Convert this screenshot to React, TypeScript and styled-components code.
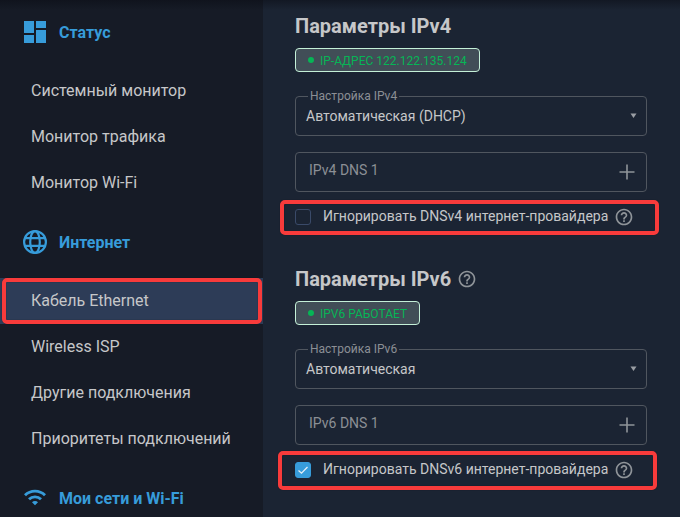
import React from "react";
import styled, { createGlobalStyle } from "styled-components";

const GlobalStyle = createGlobalStyle`
  *, *::before, *::after { box-sizing: border-box; }
  html, body { margin: 0; padding: 0; }
  body {
    background: #1b2433;
    font-family: Roboto, "Liberation Sans", sans-serif;
    color: #c6c7c9;
    overflow: hidden;
  }
`;

const Page = styled.div`
  position: relative;
  display: flex;
  width: 680px;
  height: 517px;
  overflow: hidden;
  background: #1b2433;
`;

const TopShade = styled.div`
  position: absolute;
  inset: 0 0 auto 0;
  height: 10px;
  background: linear-gradient(rgba(10, 12, 20, 0.5), rgba(10, 12, 20, 0));
`;

const Sidebar = styled.nav`
  flex: 0 0 263px;
  margin-top: -4px;
  background: #161b26;
`;

const GroupTitle = styled.div`
  display: flex;
  align-items: center;
  gap: 11px;
  height: 72px;
  padding-left: 22px;
  color: #379cda;
  font-size: 16px;
  font-weight: 700;
  white-space: nowrap;

  svg { flex: none; display: block; }
`;

const NavItem = styled.div<{ $active?: boolean }>`
  position: relative;
  display: flex;
  align-items: center;
  height: 46px;
  padding: 0 0 1px 31px;
  font-size: 16px;
  white-space: nowrap;
  background: ${({ $active }) => ($active ? "#2d3c57" : "transparent")};
`;

const Marker = styled.div<{ $inset: string }>`
  position: absolute;
  inset: ${({ $inset }) => $inset};
  border: 4px solid #f83b3b;
  border-radius: 5px;
  box-shadow: 0 0 1px rgba(0, 0, 0, 0.6), inset 0 0 1px rgba(0, 0, 0, 0.6);
  pointer-events: none;
`;

const Main = styled.main`
  flex: 1;
  padding: 12px 33px 0 32px;
`;

const Section = styled.section`
  height: 253px;
`;

const SectionTitle = styled.h2`
  display: flex;
  align-items: center;
  gap: 6px;
  margin: 0 0 8px;
  height: 28px;
  font-size: 20px;
  font-weight: 700;
`;

const Badge = styled.div`
  display: inline-flex;
  align-items: center;
  gap: 6px;
  height: 24px;
  padding: 1px 12px 0;
  border: 1px solid #c4f0d8;
  border-radius: 4px;
  background: #414e57;
  color: #06b556;
  font-size: 12px;
  white-space: nowrap;
  vertical-align: top;
`;

const Dot = styled.span`
  width: 6px;
  height: 6px;
  margin-top: -1px;
  border-radius: 50%;
  background: #06b556;
`;

const Field = styled.div<{ $gap: number; $muted?: boolean }>`
  position: relative;
  display: flex;
  align-items: center;
  justify-content: space-between;
  height: 40px;
  margin-top: ${({ $gap }) => $gap}px;
  padding: 0 9px 0 ${({ $muted }) => ($muted ? 13 : 10)}px;
  border: 1px solid #50565f;
  border-radius: 4px;
  color: ${({ $muted }) => ($muted ? "#8b8f95" : "#c6c7c9")};
  font-size: 14px;

  svg { display: block; }
`;

const FieldText = styled.span<{ $lift?: boolean }>`
  padding-bottom: ${({ $lift }) => ($lift ? 4 : 0)}px;
`;

const FieldLabel = styled.span`
  position: absolute;
  top: -9px;
  left: 12px;
  padding: 0 2px;
  background: #1b2433;
  color: #8b8f95;
  font-size: 12px;
  line-height: 16px;
  white-space: nowrap;
`;

const CheckRow = styled.div`
  position: relative;
  display: flex;
  align-items: center;
  height: 18px;
  margin-top: 16px;
  font-size: 14px;
  white-space: nowrap;
`;

const CheckBox = styled.span<{ $checked?: boolean }>`
  display: grid;
  place-items: center;
  flex: none;
  width: 16px;
  height: 16px;
  border: 1px solid ${({ $checked }) => ($checked ? "#379cda" : "#3a4a69")};
  border-radius: 3px;
  background: ${({ $checked }) => ($checked ? "#379cda" : "transparent")};
`;

const CheckLabel = styled.span`
  margin: 0 6px 0 12px;
  padding-bottom: 2px;
`;

const DashboardIcon = () => (
  <svg width="26" height="24" viewBox="0 0 26 24" fill="#379cda">
    <path d="M2 1h10v12H2zM14 1h10v7H14zM2 15h10v8H2zM14 10h10v13H14z" />
  </svg>
);

const GlobeIcon = () => (
  <svg width="26" height="26" viewBox="0 0 26 26" fill="none" stroke="#379cda" strokeWidth="2.2">
    <circle cx="13" cy="13" r="10.9" />
    <ellipse cx="13" cy="13" rx="4.8" ry="10.9" />
    <path d="M3 9.2h20M3 16.8h20" />
  </svg>
);

const WifiIcon = () => (
  <svg width="26" height="24" viewBox="0 0 26 24" fill="#379cda">
    <path d="M2 8.3a15.56 15.56 0 0 1 22 0l-2 2a12.73 12.73 0 0 0-18 0zM6 12.3a9.9 9.9 0 0 1 14 0l-2 2a7.07 7.07 0 0 0-10 0zM10 16.3a4.24 4.24 0 0 1 6 0l-3 3z" />
  </svg>
);

const HelpIcon = () => (
  <svg width="20" height="20" viewBox="0 0 24 24" fill="#8f9499">
    <path d="M11 18h2v-2h-2v2zm1-16C6.48 2 2 6.48 2 12s4.48 10 10 10 10-4.48 10-10S17.52 2 12 2zm0 18c-4.41 0-8-3.59-8-8s3.59-8 8-8 8 3.59 8 8-3.59 8-8 8zm0-14c-2.21 0-4 1.79-4 4h2c0-1.1.9-2 2-2s2 .9 2 2c0 2-3 1.75-3 5h2c0-2.25 3-2.5 3-5 0-2.21-1.79-4-4-4z" />
  </svg>
);

const PlusIcon = () => (
  <svg width="20" height="20" viewBox="0 0 20 20" stroke="#8f9499" strokeWidth="1.6">
    <path d="M10 2.5v15M2.5 10h15" />
  </svg>
);

const ArrowIcon = () => (
  <svg width="7" height="6" viewBox="0 0 7 6" fill="#9a9ea4">
    <path d="M0.5 0.5h6L3.5 5z" />
  </svg>
);

const CheckIcon = () => (
  <svg width="12" height="12" viewBox="0 0 12 12" fill="none" stroke="#e4eef6" strokeWidth="1.3">
    <path d="M1.5 6.5l3 2.7 6-6.2" />
  </svg>
);

type SettingsProps = {
  version: string;
  status: string;
  mode: string;
  checked?: boolean;
  titleHelp?: boolean;
  marker: string;
};

const Settings = ({ version, status, mode, checked, titleHelp, marker }: SettingsProps) => (
  <Section>
    <SectionTitle>
      Параметры IP{version}
      {titleHelp && <HelpIcon />}
    </SectionTitle>
    <Badge>
      <Dot />
      {status}
    </Badge>
    <Field $gap={24}>
      <FieldLabel>Настройка IP{version}</FieldLabel>
      <FieldText>{mode}</FieldText>
      <ArrowIcon />
    </Field>
    <Field $gap={16} $muted>
      <FieldText $lift>IP{version} DNS 1</FieldText>
      <PlusIcon />
    </Field>
    <CheckRow>
      <CheckBox $checked={checked}>{checked && <CheckIcon />}</CheckBox>
      <CheckLabel>Игнорировать DNS{version} интернет-провайдера</CheckLabel>
      <HelpIcon />
      <Marker $inset={marker} />
    </CheckRow>
  </Section>
);

export default function App() {
  return (
    <>
      <GlobalStyle />
      <Page>
        <Sidebar>
          <GroupTitle><DashboardIcon />Статус</GroupTitle>
          <NavItem>Системный монитор</NavItem>
          <NavItem>Монитор трафика</NavItem>
          <NavItem>Монитор Wi-Fi</NavItem>
          <GroupTitle><GlobeIcon />Интернет</GroupTitle>
          <NavItem $active>
            Кабель Ethernet
            <Marker $inset="0 1px 0 2px" />
          </NavItem>
          <NavItem>Wireless ISP</NavItem>
          <NavItem>Другие подключения</NavItem>
          <NavItem>Приоритеты подключений</NavItem>
          <GroupTitle><WifiIcon />Мои сети и Wi-Fi</GroupTitle>
        </Sidebar>
        <Main>
          <Settings
            version="v4"
            status="IP-АДРЕС 122.122.135.124"
            mode="Автоматическая (DHCP)"
            marker="-8px -12px -9px -15px"
          />
          <Settings
            version="v6"
            status="IPV6 РАБОТАЕТ"
            mode="Автоматическая"
            marker="-10px -10px -11px -17px"
            checked
            titleHelp
          />
        </Main>
        <TopShade />
      </Page>
    </>
  );
}
